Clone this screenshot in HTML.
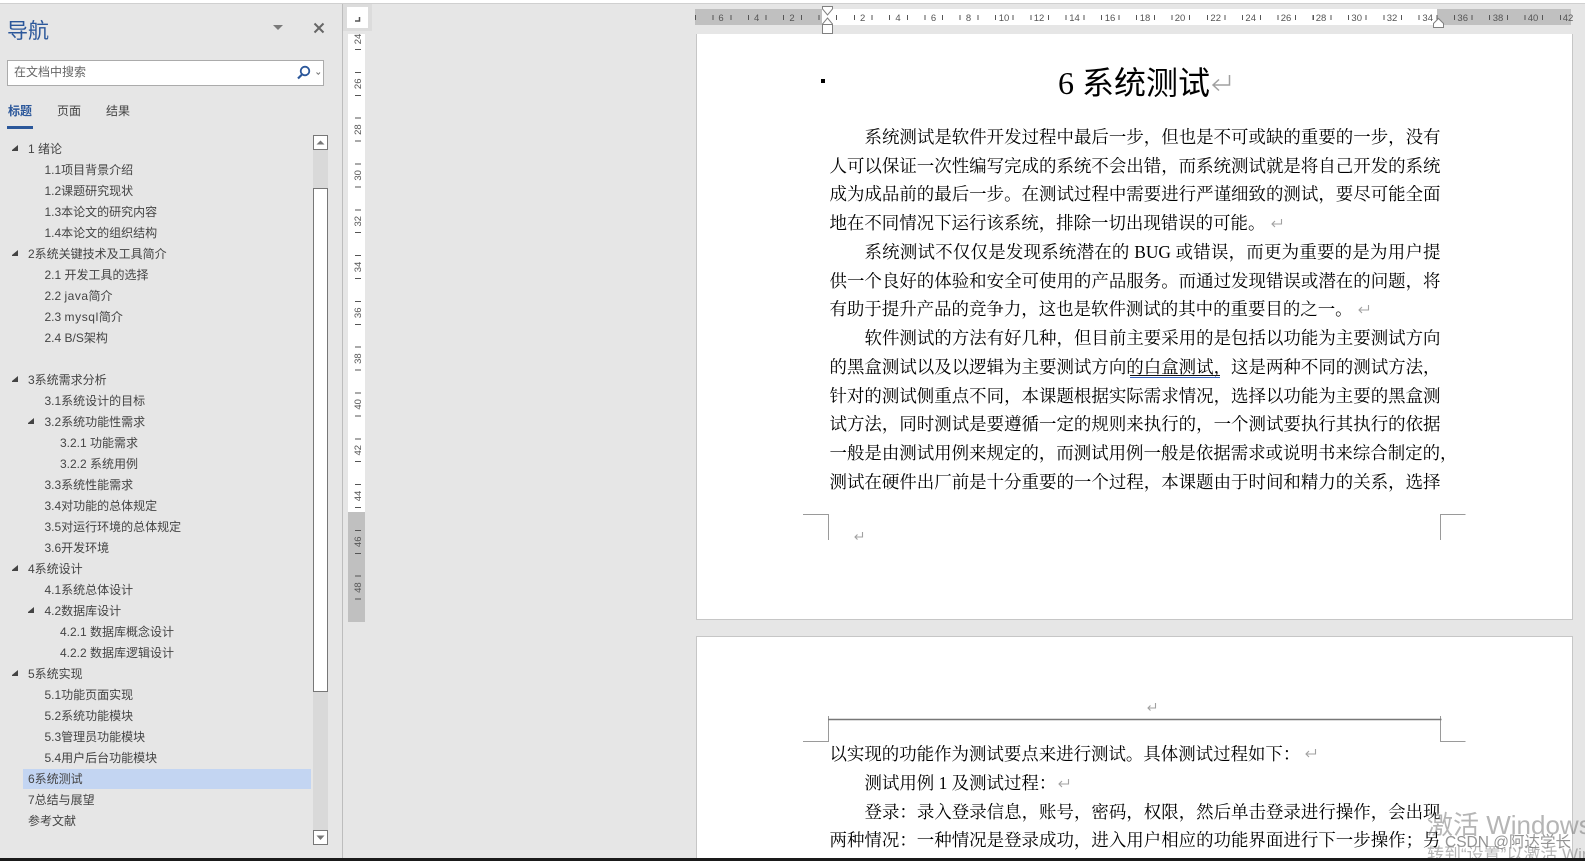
<!DOCTYPE html>
<html lang="zh">
<head>
<meta charset="utf-8">
<title>导航</title>
<style>
html,body{margin:0;padding:0;background:#e6e6e6}
#root{position:relative;width:1585px;height:861px;overflow:hidden;background:#e6e6e6;font-family:"Liberation Sans","Noto Sans CJK SC",sans-serif}
#root div{position:absolute}
.t{left:0;height:21px;line-height:21px;font-size:12px;color:#444;white-space:nowrap;margin-top:1px}
.a{left:28px}.b{left:44.5px}.c{left:60px}
.l{left:829.5px;width:611px;height:28px;line-height:28px;font-size:17.45px;color:#000;white-space:nowrap;text-align:justify;text-align-last:justify;font-family:"Liberation Serif","Noto Serif CJK SC",serif}
.i{left:864.5px;width:576px}
.n{text-align:left;text-align-last:left;width:auto}
.tab{top:102px;height:18px;line-height:18px;font-size:12px;color:#444;white-space:nowrap}
</style>
</head>
<body>
<div id="root">
  <!-- top strip -->
  <div style="left:0;top:0;width:1585px;height:3px;background:#fff"></div>
  <div style="left:0;top:3px;width:1585px;height:1px;background:#d0d0d0"></div>

  <!-- nav header -->
  <div style="left:7px;top:18px;font-size:21px;line-height:28px;color:#2b579a;white-space:nowrap">导航</div>
  <div style="left:7px;top:60px;width:315px;height:24px;background:#fff;border:1px solid #ababab"></div>
  <div style="left:14px;top:63px;font-size:12px;line-height:18px;color:#666;white-space:nowrap">在文档中搜索</div>
  <div class="tab" style="left:8px;color:#2b579a;font-weight:700">标题</div>
  <div class="tab" style="left:57px">页面</div>
  <div class="tab" style="left:106px">结果</div>
  <div style="left:7px;top:126px;width:26px;height:3px;background:#2b579a"></div>

  <!-- tree highlight -->
  <div style="left:23px;top:769px;width:288px;height:20px;background:#c3d5f2"></div>

  <!-- tree -->
  <div class="t a" style="top:138px">1 绪论</div>
  <div class="t b" style="top:159px">1.1项目背景介绍</div>
  <div class="t b" style="top:180px">1.2课题研究现状</div>
  <div class="t b" style="top:201px">1.3本论文的研究内容</div>
  <div class="t b" style="top:222px">1.4本论文的组织结构</div>
  <div class="t a" style="top:243px">2系统关键技术及工具简介</div>
  <div class="t b" style="top:264px">2.1 开发工具的选择</div>
  <div class="t b" style="top:285px">2.2 <span style="letter-spacing:.5px">java</span>简介</div>
  <div class="t b" style="top:306px">2.3 <span style="letter-spacing:.6px">mysql</span>简介</div>
  <div class="t b" style="top:327px">2.4 B/S架构</div>
  <div class="t a" style="top:369px">3系统需求分析</div>
  <div class="t b" style="top:390px">3.1系统设计的目标</div>
  <div class="t b" style="top:411px">3.2系统功能性需求</div>
  <div class="t c" style="top:432px">3.2.1 功能需求</div>
  <div class="t c" style="top:453px">3.2.2 系统用例</div>
  <div class="t b" style="top:474px">3.3系统性能需求</div>
  <div class="t b" style="top:495px">3.4对功能的总体规定</div>
  <div class="t b" style="top:516px">3.5对运行环境的总体规定</div>
  <div class="t b" style="top:537px">3.6开发环境</div>
  <div class="t a" style="top:558px">4系统设计</div>
  <div class="t b" style="top:579px">4.1系统总体设计</div>
  <div class="t b" style="top:600px">4.2数据库设计</div>
  <div class="t c" style="top:621px">4.2.1 数据库概念设计</div>
  <div class="t c" style="top:642px">4.2.2 数据库逻辑设计</div>
  <div class="t a" style="top:663px">5系统实现</div>
  <div class="t b" style="top:684px">5.1功能页面实现</div>
  <div class="t b" style="top:705px">5.2系统功能模块</div>
  <div class="t b" style="top:726px">5.3管理员功能模块</div>
  <div class="t b" style="top:747px">5.4用户后台功能模块</div>
  <div class="t a" style="top:768px">6系统测试</div>
  <div class="t a" style="top:789px">7总结与展望</div>
  <div class="t a" style="top:810px">参考文献</div>

  <!-- nav scrollbar -->
  <div style="left:313px;top:135px;width:15px;height:710px;background:#d9d9d9"></div>
  <div style="left:313px;top:135px;width:13px;height:13px;background:#fff;border:1px solid #777"></div>
  <div style="left:313px;top:188px;width:13px;height:502px;background:#fff;border:1px solid #777"></div>
  <div style="left:313px;top:830px;width:13px;height:13px;background:#fff;border:1px solid #777"></div>

  <!-- pane divider -->
  <div style="left:342px;top:4px;width:1px;height:854px;background:#bdbdbd"></div>

  <!-- vertical ruler -->
  <div style="left:343px;top:4px;width:29px;height:27px;background:#dcdcdc"></div>
  <div style="left:347px;top:7px;width:21px;height:21px;background:#fff"></div>
  <div style="left:348px;top:34px;width:17px;height:478px;background:#fff"></div>
  <div style="left:348px;top:512px;width:17px;height:110px;background:#c0c0c0"></div>
  <div style="left:355px;top:49px;width:6px;height:565px;background:repeating-linear-gradient(180deg,#555 0,#555 1px,transparent 1px,transparent 22.9px)"></div>

  <!-- horizontal ruler -->
  <div style="left:695px;top:9px;width:127px;height:16px;background:#c0c0c0"></div>
  <div style="left:822px;top:9px;width:615px;height:16px;background:#fff"></div>
  <div style="left:1437px;top:9px;width:134px;height:16px;background:#c0c0c0"></div>
  <div style="left:695px;top:15px;width:876px;height:5px;background:repeating-linear-gradient(90deg,#555 0,#555 1px,transparent 1px,transparent 17.65px)"></div>

  <!-- pages -->
  <div style="left:696px;top:34px;width:875px;height:585px;background:#fff;border:1px solid #c6c6c6;border-top:0"></div>
  <div style="left:696px;top:636px;width:875px;height:222px;background:#fff;border-left:1px solid #c6c6c6;border-right:1px solid #c6c6c6;border-top:1px solid #c6c6c6"></div>

  <!-- title -->
  <div style="left:1058px;top:63px;height:40px;line-height:40px;font-size:32px;color:#000;white-space:nowrap;font-family:'Liberation Serif','Noto Sans CJK SC',sans-serif">6 系统测试</div>
  <div style="left:821px;top:79px;width:4px;height:4px;background:#000"></div>

  <!-- page 1 body -->
  <div class="l i" style="top:123px">系统测试是软件开发过程中最后一步，但也是不可或缺的重要的一步，没有</div>
  <div class="l" style="top:152px">人可以保证一次性编写完成的系统不会出错，而系统测试就是将自己开发的系统</div>
  <div class="l" style="top:180px">成为成品前的最后一步。在测试过程中需要进行严谨细致的测试，要尽可能全面</div>
  <div class="l n" style="top:209px">地在不同情况下运行该系统，排除一切出现错误的可能。</div>
  <div class="l i" style="top:238px">系统测试不仅仅是发现系统潜在的 BUG 或错误，而更为重要的是为用户提</div>
  <div class="l" style="top:267px">供一个良好的体验和安全可使用的产品服务。而通过发现错误或潜在的问题，将</div>
  <div class="l n" style="top:295px">有助于提升产品的竞争力，这也是软件测试的其中的重要目的之一。</div>
  <div class="l i" style="top:324px">软件测试的方法有好几种，但目前主要采用的是包括以功能为主要测试方向</div>
  <div class="l" style="top:353px">的黑盒测试以及以逻辑为主要测试方向的白盒测试，这是两种不同的测试方法，</div>
  <div class="l" style="top:382px">针对的测试侧重点不同，本课题根据实际需求情况，选择以功能为主要的黑盒测</div>
  <div class="l" style="top:410px">试方法，同时测试是要遵循一定的规则来执行的，一个测试要执行其执行的依据</div>
  <div class="l" style="top:439px;width:628px">一般是由测试用例来规定的，而测试用例一般是依据需求或说明书来综合制定的，</div>
  <div class="l" style="top:468px">测试在硬件出厂前是十分重要的一个过程，本课题由于时间和精力的关系，选择</div>
  <div style="left:1130px;top:375px;width:90px;height:1px;background:#111"></div>
  <div style="left:1130px;top:377px;width:90px;height:1px;background:#2f5fbf"></div>

  <!-- page 2 body -->
  <div class="l n" style="top:740px">以实现的功能作为测试要点来进行测试。具体测试过程如下：</div>
  <div class="l n" style="left:864.5px;top:769px">测试用例 1 及测试过程：</div>
  <div class="l" style="left:864.5px;width:576px;top:798px">登录：录入登录信息，账号，密码，权限，然后单击登录进行操作，会出现</div>
  <div class="l" style="top:826px">两种情况：一种情况是登录成功，进入用户相应的功能界面进行下一步操作；另</div>

  <!-- overlay: icons, marks and ruler labels -->
  <svg width="1585" height="861" viewBox="0 0 1585 861" style="position:absolute;left:0;top:0">
    <!-- close + dropdown -->
    <path d="M273 25H283L278 30Z" fill="#7a7a7a"/>
    <path d="M314.5 23.5L323.5 32.5M323.5 23.5L314.5 32.5" stroke="#666" stroke-width="2" fill="none"/>
    <!-- search -->
    <circle cx="305" cy="71" r="4.3" fill="none" stroke="#2b579a" stroke-width="1.8"/>
    <path d="M302 74.5L298 78.5" stroke="#2b579a" stroke-width="2.2" fill="none"/>
    <path d="M316.5 72.5L318.3 74.3L320 72.5" stroke="#777" stroke-width="1" fill="none"/>
    <!-- tree arrows -->
    <g fill="#444">
      <path d="M12 151V150L18 145V151Z"/>
      <path d="M12 256V255L18 250V256Z"/>
      <path d="M12 382V381L18 376V382Z"/>
      <path d="M28 424V423L34 418V424Z"/>
      <path d="M12 571V570L18 565V571Z"/>
      <path d="M28 613V612L34 607V613Z"/>
      <path d="M12 676V675L18 670V676Z"/>
    </g>
    <!-- scrollbar arrows -->
    <path d="M316.5 144.5H324.5L320.5 140.5Z" fill="#777"/>
    <path d="M316.5 835.5H324.5L320.5 840Z" fill="#777"/>
    <!-- ruler corner glyph -->
    <path d="M359.5 17V21H355" fill="none" stroke="#555" stroke-width="1.5"/>
    <!-- horizontal ruler markers -->
    <path d="M822.5 6.5H832.5V9L827.5 15L822.5 9Z" fill="#fff" stroke="#808080"/>
    <path d="M827.5 18L832.5 24V33.5H822.5V24Z" fill="#fff" stroke="#808080"/>
    <path d="M822.5 24.5H832.5" stroke="#808080" fill="none"/>
    <path d="M1433.5 27.5V23.5L1438.5 18.5L1443.5 23.5V27.5Z" fill="#fff" stroke="#808080"/>
    <!-- crop marks page 1 -->
    <path d="M803 514.5H828.5V540M1465.5 514.5H1440.5V540" fill="none" stroke="#9a9a9a"/>
    <!-- crop marks page 2 + header rule -->
    <path d="M803 741.5H828.5V716M1465.5 741.5H1440.5V716" fill="none" stroke="#9a9a9a"/>
    <path d="M828 719.5H1441.5" stroke="#777" stroke-width="1.4" fill="none"/>
    <!-- paragraph marks -->
    <g fill="none" stroke="#a0a0a0">
      <path stroke-width="1.5" d="M1229.5 75V85H1213M1219 79.5L1213 85L1219 90.5"/>
      <path stroke-width="1.1" d="M1281.5 219V224H1272M1275 221L1272 224L1275 227"/>
      <path stroke-width="1.1" d="M1368.5 305V310H1359M1362 307L1359 310L1362 313"/>
      <path stroke-width="1.1" d="M1315.5 749V754H1306M1309 751L1306 754L1309 757"/>
      <path stroke-width="1.1" d="M1068.5 779V784H1059M1062 781L1059 784L1062 787"/>
      <path stroke-width="1.1" d="M862.5 532V537H855M857.5 534.5L855 537L857.5 539.5"/>
      <path stroke-width="1.1" d="M1155.5 703V708H1148M1150.5 705.5L1148 708L1150.5 710.5"/>
    </g>
    <!-- horizontal ruler labels -->
    <g font-family="Liberation Sans, sans-serif" font-size="9.5" fill="#555" text-anchor="middle">
      <text x="721" y="21">6</text><text x="756.7" y="21">4</text><text x="792" y="21">2</text>
      <text x="862.7" y="21">2</text><text x="898" y="21">4</text><text x="933.5" y="21">6</text>
      <text x="968.5" y="21">8</text><text x="1004" y="21">10</text><text x="1039" y="21">12</text>
      <text x="1074.5" y="21">14</text><text x="1110" y="21">16</text><text x="1145" y="21">18</text>
      <text x="1180" y="21">20</text><text x="1215.7" y="21">22</text><text x="1250.7" y="21">24</text>
      <text x="1286" y="21">26</text><text x="1321" y="21">28</text><text x="1356.7" y="21">30</text>
      <text x="1392" y="21">32</text><text x="1427.7" y="21">34</text><text x="1462.7" y="21">36</text>
      <text x="1498" y="21">38</text><text x="1533" y="21">40</text><text x="1568" y="21">42</text>
    </g>
    <!-- vertical ruler labels -->
    <g font-family="Liberation Sans, sans-serif" font-size="9.5" fill="#555" text-anchor="middle">
      <text transform="translate(361 39) rotate(-90)">24</text>
      <text transform="translate(361 83.8) rotate(-90)">26</text>
      <text transform="translate(361 129.6) rotate(-90)">28</text>
      <text transform="translate(361 175.4) rotate(-90)">30</text>
      <text transform="translate(361 221.2) rotate(-90)">32</text>
      <text transform="translate(361 267) rotate(-90)">34</text>
      <text transform="translate(361 312.8) rotate(-90)">36</text>
      <text transform="translate(361 358.6) rotate(-90)">38</text>
      <text transform="translate(361 404.4) rotate(-90)">40</text>
      <text transform="translate(361 450.2) rotate(-90)">42</text>
      <text transform="translate(361 496) rotate(-90)">44</text>
      <text transform="translate(361 541.8) rotate(-90)">46</text>
      <text transform="translate(361 587.6) rotate(-90)">48</text>
    </g>
  </svg>

  <!-- watermarks -->
  <div style="left:1427px;top:810px;font-size:26px;line-height:30px;color:rgba(120,120,120,.55);white-space:nowrap">激活 Windows</div>
  <div style="left:1427px;top:843px;font-size:17px;line-height:24px;color:rgba(120,120,120,.55);white-space:nowrap">转到“设置”以激活 Windows</div>
  <div style="left:1445px;top:833px;font-size:15.5px;line-height:20px;color:rgba(120,120,120,.8);white-space:nowrap">CSDN @阿达学长</div>

  <!-- bottom band -->
  <div style="left:0;top:858px;width:1585px;height:3px;background:#1a1a1a"></div>
</div>
</body>
</html>
